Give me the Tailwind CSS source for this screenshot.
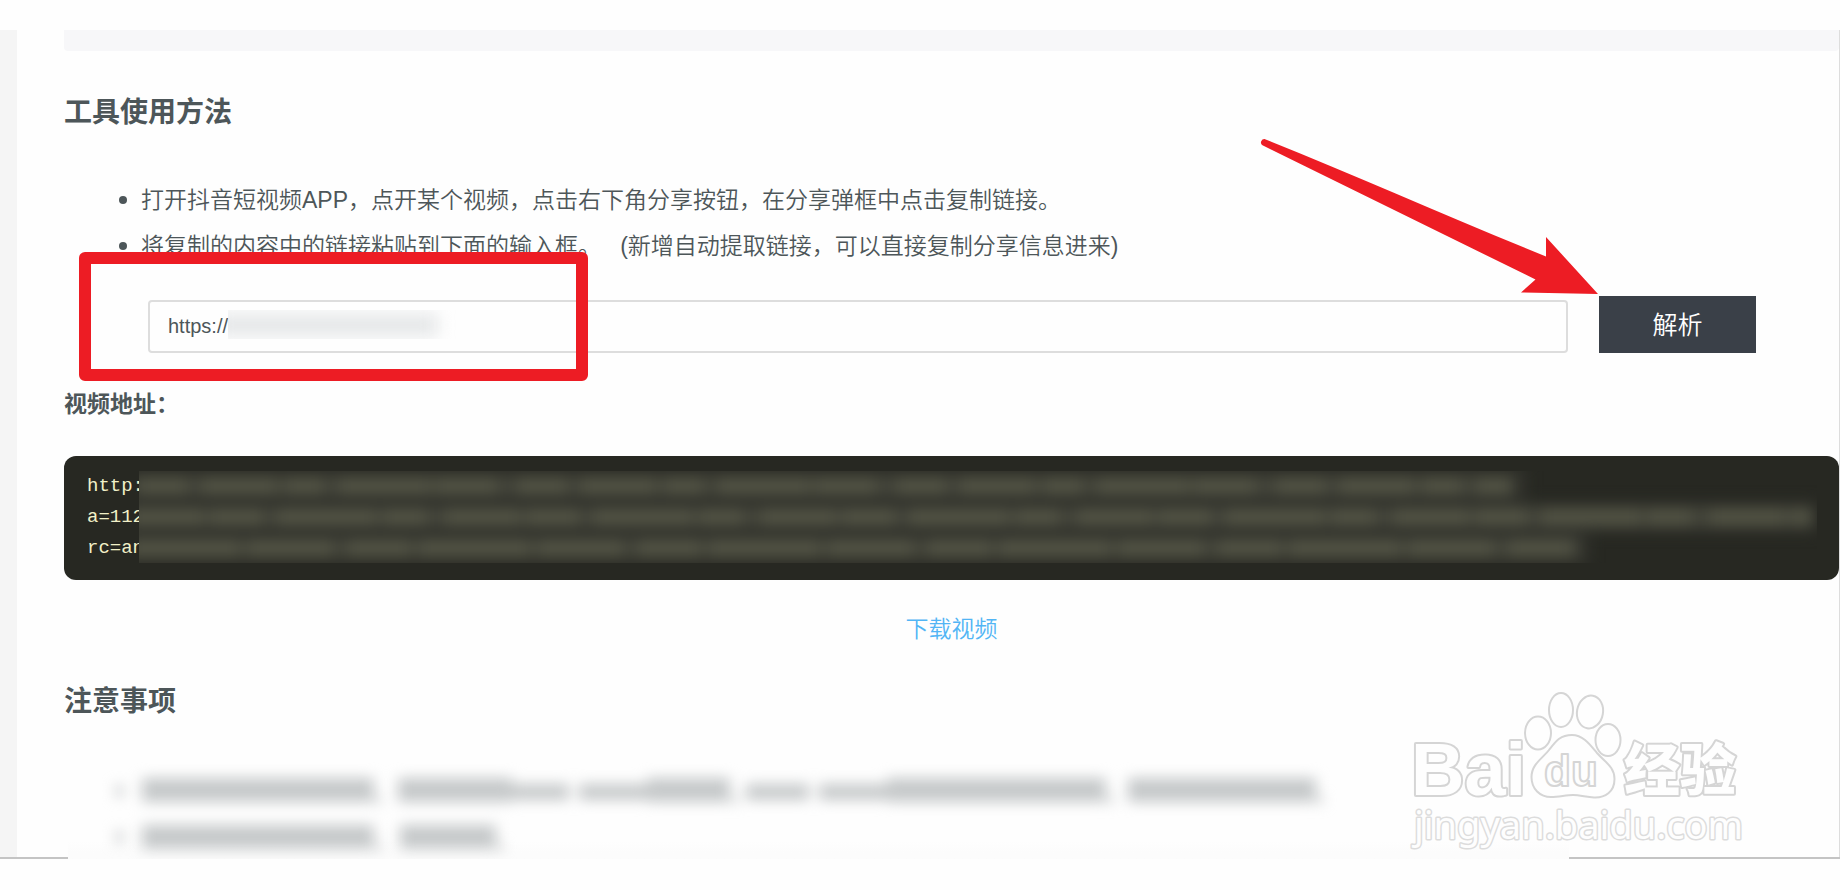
<!DOCTYPE html>
<html lang="zh-CN">
<head>
<meta charset="utf-8">
<meta name="viewport" content="width=device-width, initial-scale=1">
<title>工具使用方法</title>
<script src="https://cdn.jsdelivr.net/npm/@tailwindcss/browser@4"></script>
</head>
<body class="bg-[#fefefe] pt-[30px] text-[23px] text-[#4d5659] font-['Liberation_Sans','Noto_Sans_CJK_SC',sans-serif]">
<div class="relative flex border-b-2 border-[#c4c4c4]">
  <div class="w-[17px] shrink-0 bg-[#f5f5f5]"></div>
  <div class="absolute right-[271px] -bottom-1 left-[68px] h-5 bg-linear-to-b from-[#fcfcfc]/0 to-[#fcfcfc] to-60%"></div>
  <main class="min-w-0 flex-1 border-r border-[#dddddd] pl-[47px]">
    <div class="h-[21px] rounded-b bg-[#f7f7f9]"></div>

    <h2 class="mt-[42px] text-[28px] leading-10 font-bold">工具使用方法</h2>
    <ul class="mt-11 pl-[55px] font-[350] leading-[46px]">
      <li class="flex items-center gap-[14px]"><span class="size-2 rounded-full bg-[#4d5659]"></span><span>打开抖音短视频APP，点开某个视频，点击右下角分享按钮，在分享弹框中点击复制链接。</span></li>
      <li class="flex items-center gap-[14px]"><span class="size-2 rounded-full bg-[#4d5659]"></span><span>将复制的内容中的链接粘贴到下面的输入框。&nbsp;&nbsp;&nbsp;(新增自动提取链接，可以直接复制分享信息进来)</span></li>
    </ul>

    <form class="relative mt-[27px] flex items-end gap-[31px] pr-[83px] pl-[84px]">
      <div class="relative min-w-0 flex-1">
        <input type="text" value="https://" aria-label="视频链接" class="block h-[53px] w-full rounded border-2 border-[#dddddd] bg-[#fefefe] px-[18px] text-xl outline-none">
        <!-- hidden part of the link -->
        <div class="absolute top-[10px] left-20 h-[29px] w-[228px] overflow-hidden">
          <div class="mt-1 -ml-3 h-[22px] w-[222px] bg-[#e5e7e8] blur-[8px]"></div>
        </div>
      </div>
      <div class="relative">
        <button type="button" class="block h-[57px] w-[157px] bg-[#3a4048] pt-0.5 text-[25px] font-[350] text-white">解析</button>
        <svg class="absolute right-[157px] bottom-[57px] h-[160px] w-[340px]" viewBox="0 0 340 160" fill="#ed1c24" aria-hidden="true">
          <path d="M5.500 3 C95 39 190 81 287 120.500 V101 L339 158 L262 156.500 L276.500 143.500 L3 9 A3.500 3.500 0 0 1 5.500 3Z"/>
        </svg>
      </div>
      <div class="absolute -top-11 left-[15px] h-[129px] w-[509px] rounded-md border-12 border-[#ed1c24]"></div>
    </form>

    <h3 class="mt-[31px] leading-10 font-bold">视频地址：</h3>
    <div class="relative mt-8 h-[124px] overflow-hidden rounded-xl bg-[#272822] pt-[15px] pl-[23px]">
      <pre class="font-['Liberation_Mono',monospace] text-[19px] leading-[31px] text-[#f1f0c8]">http:
a=112
rc=an</pre>
      <!-- masked address -->
      <div class="absolute top-[15px] right-[22px] left-[75px] h-[92px] overflow-hidden bg-[#272822]">
        <svg class="h-full w-full" viewBox="0 0 1677 92" preserveAspectRatio="none" fill="none" aria-hidden="true">
          <g class="blur-[7px]">
            <path d="M-20 -4H1388V30H1677V62H1450V96H-20Z" fill="#2f302a"/>
            <g stroke="#43443a" stroke-width="20">
              <path d="M-10 15H1375M-10 46H1673M-10 77H1440"/>
            </g>
            <g stroke="#525344" stroke-width="16">
              <path d="M0 15H1370" stroke-dasharray="48 15 74 9 38 16 91 5 61 22"/>
              <path d="M-10 46H1670" stroke-dasharray="75 6 52 15 99 7 43 19"/>
              <path d="M-10 77H1435" stroke-dasharray="110 9 84 16 62 9"/>
            </g>
          </g>
        </svg>
      </div>
    </div>

    <p class="mt-[29px] text-center leading-10"><a href="#" class="font-[350] text-[#52b5f5]">下载视频</a></p>

    <h2 class="mt-[33px] text-[28px] leading-10 font-bold">注意事项</h2>
    <!-- blurred notes -->
    <div class="relative mt-[45px] h-[90px]">
      <svg class="absolute top-0 left-0 h-[92px] w-[1280px] overflow-visible blur-[7px]" viewBox="0 0 1280 92" fill="none" stroke="#c6c9ca" aria-hidden="true">
        <g stroke-width="24">
          <path d="M78 23H310M334 23H448M583 23H666M823 23H1042M1064 23H1252"/>
          <path d="M78 70H310M336 70H432"/>
        </g>
        <path d="M446 25H505M515 25H585M682 25H745M755 25H825" stroke-width="16"/>
        <path d="M52 24H59M52 70H59" stroke-width="12"/>
        <path d="M312 33H317M669 33H674M1044 33H1049M1254 33H1259M312 80H317M434 80H439" stroke-width="7"/>
      </svg>
    </div>
  </main>

  <svg class="absolute right-[90px] -bottom-0.5 h-[170px] w-[350px]" viewBox="1400 690 350 170" fill="#fefefe" stroke="#d5d5d5" stroke-width="2" stroke-linejoin="round" role="img" aria-label="Baidu 经验">
    <g font-family="Liberation Sans, sans-serif" font-weight="700" paint-order="stroke" stroke-width="4">
      <text x="1411" y="796" font-size="74">Bai</text>
      <text x="1624" y="791" font-size="56" font-family="Noto Sans CJK SC, sans-serif" font-weight="900">经验</text>
    </g>
    <ellipse cx="1538" cy="734" rx="13" ry="16.500"/>
    <ellipse cx="1561" cy="711" rx="12" ry="17"/>
    <ellipse cx="1590" cy="713" rx="13" ry="16.500" transform="rotate(10 1590 713)"/>
    <ellipse cx="1608" cy="741" rx="12.500" ry="16"/>
    <path d="M1572 736C1584 736 1591 747 1597 754C1606 764 1614.500 768 1614.500 780C1614.500 793 1605 799 1594 798.500C1586 798 1580 796 1573 796C1566 796 1559 798 1551 798C1540 798 1531.500 790 1531.500 778C1531.500 765 1543 759 1549 751C1556 742 1560 736 1572 736Z"/>
    <text x="1544" y="787" font-family="Liberation Sans, sans-serif" font-size="44" font-weight="700">du</text>
    <text x="1414" y="840" font-family="Noto Sans, sans-serif" font-size="38" stroke="#dcdcdc" stroke-width="3" paint-order="stroke">jingyan.baidu.com</text>
  </svg>
</div>
</body>
</html>
